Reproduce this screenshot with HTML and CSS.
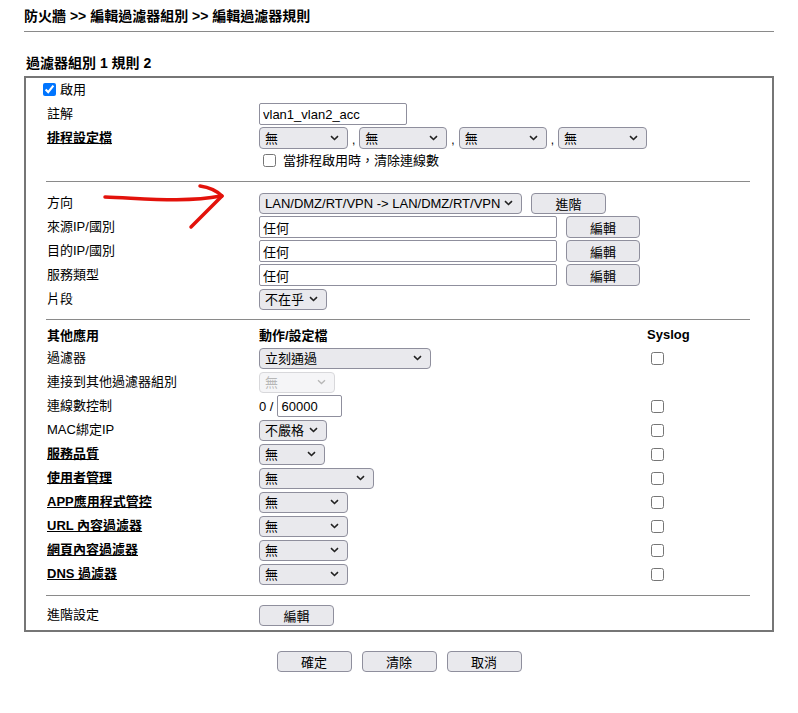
FILE: index.html
```html
<!DOCTYPE html>
<html lang="zh-Hant">
<head>
    <meta charset="UTF-8">
    <title>編輯過濾器規則</title>
    <link rel="stylesheet" href="styles.css">
</head>
<body>
    <div class="page">
        <div class="crumb">防火牆 &gt;&gt; 編輯過濾器組別 &gt;&gt; 編輯過濾器規則</div>
        <div class="title">過濾器組別 1 規則 2</div>

        <div class="box">
            <div class="row">
                <label class="enable"><input type="checkbox" checked>啟用</label>
            </div>
            <div class="row">
                <span>註解</span>
                <div><input type="text" class="txt txt-note" value="vlan1_vlan2_acc"></div>
            </div>
            <div class="row">
                <a href="#" class="link">排程設定檔</a>
                <div class="sched">
                    <select class="sel w90"><option>無</option></select><span class="comma">,</span>
                    <select class="sel w89"><option>無</option></select><span class="comma">,</span>
                    <select class="sel w89"><option>無</option></select><span class="comma">,</span>
                    <select class="sel w90"><option>無</option></select>
                </div>
            </div>
            <div class="row row-short">
                <span></span>
                <label class="clear"><input type="checkbox">當排程啟用時，清除連線數</label>
            </div>

            <div class="sep sep-1"></div>

            <div class="row">
                <span>方向</span>
                <div class="ctrl">
                    <select class="sel w263"><option>LAN/DMZ/RT/VPN -&gt; LAN/DMZ/RT/VPN</option></select>
                    <button class="btn">進階</button>
                </div>
            </div>
            <div class="row">
                <span>來源IP/國別</span>
                <div class="ctrl">
                    <input type="text" class="txt txt-wide" value="任何">
                    <button class="btn">編輯</button>
                </div>
            </div>
            <div class="row">
                <span>目的IP/國別</span>
                <div class="ctrl">
                    <input type="text" class="txt txt-wide" value="任何">
                    <button class="btn">編輯</button>
                </div>
            </div>
            <div class="row">
                <span>服務類型</span>
                <div class="ctrl">
                    <input type="text" class="txt txt-wide" value="任何">
                    <button class="btn">編輯</button>
                </div>
            </div>
            <div class="row">
                <span>片段</span>
                <div><select class="sel w68"><option>不在乎</option></select></div>
            </div>

            <div class="sep sep-2"></div>

            <div class="row row-head">
                <b>其他應用</b>
                <b>動作/設定檔</b>
                <b>Syslog</b>
            </div>
            <div class="row">
                <span>過濾器</span>
                <div><select class="sel w172"><option>立刻通過</option></select></div>
                <input type="checkbox">
            </div>
            <div class="row">
                <span>連接到其他過濾器組別</span>
                <div><select class="sel w76" disabled><option>無</option></select></div>
            </div>
            <div class="row">
                <span>連線數控制</span>
                <div class="count">0 /<input type="text" class="txt txt-count" value="60000"></div>
                <input type="checkbox">
            </div>
            <div class="row">
                <span>MAC綁定IP</span>
                <div><select class="sel w68"><option>不嚴格</option></select></div>
                <input type="checkbox">
            </div>
            <div class="row">
                <a href="#" class="link">服務品質</a>
                <div><select class="sel w66"><option>無</option></select></div>
                <input type="checkbox">
            </div>
            <div class="row">
                <a href="#" class="link">使用者管理</a>
                <div><select class="sel w115"><option>無</option></select></div>
                <input type="checkbox">
            </div>
            <div class="row">
                <a href="#" class="link">APP應用程式管控</a>
                <div><select class="sel w89"><option>無</option></select></div>
                <input type="checkbox">
            </div>
            <div class="row">
                <a href="#" class="link">URL 內容過濾器</a>
                <div><select class="sel w89"><option>無</option></select></div>
                <input type="checkbox">
            </div>
            <div class="row">
                <a href="#" class="link">網頁內容過濾器</a>
                <div><select class="sel w89"><option>無</option></select></div>
                <input type="checkbox">
            </div>
            <div class="row">
                <a href="#" class="link">DNS 過濾器</a>
                <div><select class="sel w89"><option>無</option></select></div>
                <input type="checkbox">
            </div>

            <div class="sep sep-3"></div>

            <div class="row">
                <span>進階設定</span>
                <div><button class="btn">編輯</button></div>
            </div>
        </div>

        <div class="actions">
            <button class="btn">確定</button>
            <button class="btn">清除</button>
            <button class="btn">取消</button>
        </div>

        <!-- 手描きの赤い矢印 (注釈) -->
        <svg class="arrow" width="130" height="55" viewBox="0 0 130 55">
            <g fill="none" stroke="#e3120b" stroke-width="3.5" stroke-linecap="round" stroke-linejoin="round">
                <path d="M5 17 C 40 18, 85 23, 121 16"/>
                <path d="M100 6 Q 114 8 122 16"/>
                <path d="M122 16 Q 107 31 91 47"/>
            </g>
        </svg>
    </div>
</body>
</html>
```

FILE: styles.css
```css
* {
    box-sizing: border-box;
}

body {
    margin: 0;
    background-color: #fff;
    color: #000;
    font-family: "Liberation Sans", "Noto Sans CJK TC", sans-serif;
    font-size: 13px;
}

.page {
    position: relative;
    width: 798px;
    padding: 0 24px;
}

.crumb {
    height: 32px;
    padding-top: 6px;
    line-height: 20px;
    font-size: 14px;
    font-weight: bold;
    border-bottom: 1px solid #8a8a8a;
}

.title {
    margin: 21px 0 3px;
    padding-left: 2px;
    line-height: 20px;
    font-size: 14px;
    font-weight: bold;
}

.box {
    border: 2px solid #767676;
    padding: 0 22px 3px 21px;
}

.row {
    display: grid;
    grid-template-columns: 212px 388px 1fr;
    align-items: center;
    height: 24px;
    white-space: nowrap;
}

/* 文字を 1px 上げる */
.row > span,
.row > a,
.row > b,
.row > label {
    padding-bottom: 3px;
}

.row-short {
    height: 20px;
}

.row-head {
    height: 21px;
}

.link {
    color: #000;
    font-weight: bold;
    text-decoration: underline;
}

.enable,
.clear {
    display: flex;
    align-items: center;
}

.enable input[type="checkbox"] {
    margin: 2px 4px 0 -4px;
}

.clear input[type="checkbox"] {
    margin: 2px 7px 0 4px;
}

.sep {
    height: 1px;
    margin-left: -1px;
    background-color: #8a8a8a;
}

.sep-1 {
    margin-top: 11px;
    margin-bottom: 9px;
}

.sep-2 {
    margin-top: 8px;
    margin-bottom: 5px;
}

.sep-3 {
    margin-top: 9px;
    margin-bottom: 7px;
}

.ctrl {
    display: flex;
    align-items: center;
    gap: 9px;
}

.sched {
    display: flex;
    align-items: center;
}

.comma {
    margin: 3px 4px 0 4px;
    font-size: 12px;
}

.count {
    display: flex;
    align-items: center;
    gap: 4px;
}

input[type="checkbox"] {
    width: 13px;
    height: 13px;
    margin: 0 3px 0 4px;
}

.txt {
    height: 22px;
    padding: 0 3px;
    border: 1px solid #8f8f9d;
    border-radius: 2px;
    background-color: #fff;
    color: #000;
    font-family: inherit;
    font-size: 13px;
    vertical-align: middle;
}

.txt-note {
    width: 148px;
}

.txt-wide {
    width: 298px;
}

.txt-count {
    width: 65px;
}

.sel {
    appearance: none;
    -webkit-appearance: none;
    height: 21px;
    padding: 0 20px 0 5px;
    border: 1px solid #8f8f9d;
    border-radius: 4px;
    background-color: #e9e9ed;
    background-image: url("data:image/svg+xml;utf8,<svg xmlns='http://www.w3.org/2000/svg' width='9' height='6'><path d='M1 1.2l3.5 3.3 3.5-3.3' fill='none' stroke='%23222' stroke-width='1.6'/></svg>");
    background-repeat: no-repeat;
    background-position: right 8px center;
    color: #000;
    font-family: inherit;
    font-size: 13px;
    vertical-align: middle;
}

.sel:disabled {
    border-color: #c8c8cc;
    background-color: #f2f2f4;
    background-image: url("data:image/svg+xml;utf8,<svg xmlns='http://www.w3.org/2000/svg' width='9' height='6'><path d='M1 1.2l3.5 3.3 3.5-3.3' fill='none' stroke='%23999' stroke-width='1.3'/></svg>");
    color: #9a9a9a;
}

.sched .sel {
    height: 22px;
}

.w66 { width: 66px; }
.w68 { width: 68px; }
.w76 { width: 76px; }
.w89 { width: 89px; }
.w90 { width: 90px; }
.w115 { width: 115px; }
.w172 { width: 172px; }
.w263 { width: 263px; }

.btn {
    width: 75px;
    height: 21px;
    padding: 0;
    border: 1px solid #8f8f9d;
    border-radius: 4px;
    background-color: #e9e9ed;
    color: #000;
    font-family: inherit;
    font-size: 13px;
    cursor: pointer;
}

.ctrl .txt + .btn {
    width: 74px;
    height: 22px;
}

.actions {
    display: flex;
    justify-content: center;
    gap: 10px;
    margin-top: 19px;
}

.arrow {
    position: absolute;
    left: 100px;
    top: 180px;
}
```
